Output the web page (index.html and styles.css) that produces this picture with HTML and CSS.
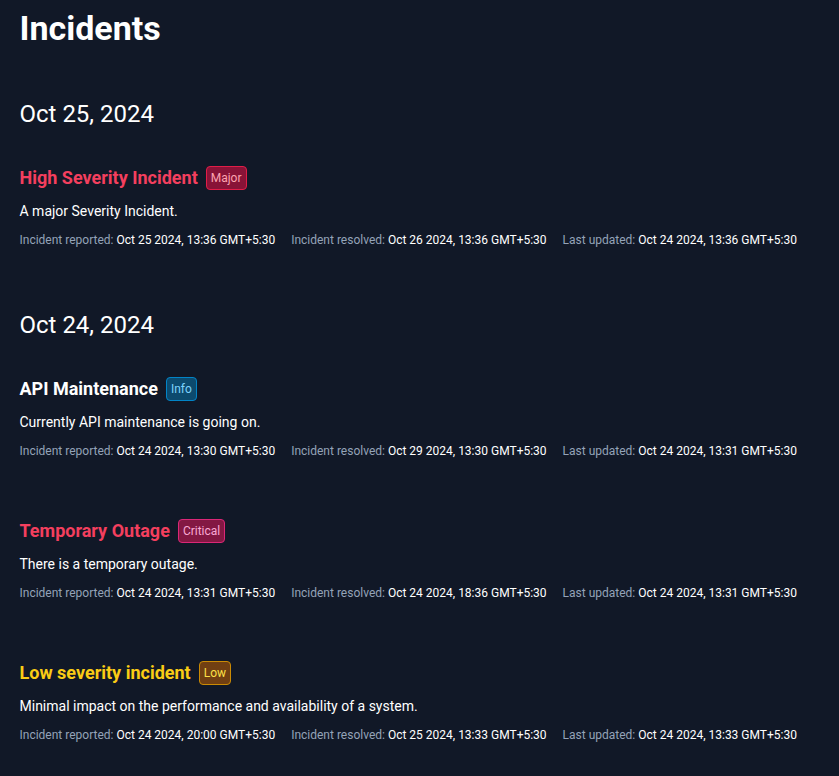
FILE: index.html
```html
<!DOCTYPE html>
<html lang="en">
<head>
<meta charset="utf-8">
<meta name="viewport" content="width=device-width, initial-scale=1">
<title>Incidents</title>
<link rel="stylesheet" href="styles.css">
</head>
<body>
<main class="page">
  <h1 class="page-title">Incidents</h1>
  <section class="day">
    <h2 class="day-title">Oct 25, 2024</h2>
    <article class="incident">
      <header class="incident-head"><h3 class="incident-title is-red">High Severity Incident</h3><span class="badge badge-major">Major</span></header>
      <p class="incident-text">A major Severity Incident.</p>
      <ul class="meta">
        <li>Incident reported: <time>Oct 25 2024, 13:36 GMT+5:30</time></li>
        <li>Incident resolved: <time>Oct 26 2024, 13:36 GMT+5:30</time></li>
        <li>Last updated: <time>Oct 24 2024, 13:36 GMT+5:30</time></li>
      </ul>
    </article>
  </section>
  <section class="day">
    <h2 class="day-title">Oct 24, 2024</h2>
    <article class="incident">
      <header class="incident-head"><h3 class="incident-title">API Maintenance</h3><span class="badge badge-info">Info</span></header>
      <p class="incident-text">Currently API maintenance is going on.</p>
      <ul class="meta">
        <li>Incident reported: <time>Oct 24 2024, 13:30 GMT+5:30</time></li>
        <li>Incident resolved: <time>Oct 29 2024, 13:30 GMT+5:30</time></li>
        <li>Last updated: <time>Oct 24 2024, 13:31 GMT+5:30</time></li>
      </ul>
    </article>
    <article class="incident">
      <header class="incident-head"><h3 class="incident-title is-red">Temporary Outage</h3><span class="badge badge-critical">Critical</span></header>
      <p class="incident-text">There is a temporary outage.</p>
      <ul class="meta">
        <li>Incident reported: <time>Oct 24 2024, 13:31 GMT+5:30</time></li>
        <li>Incident resolved: <time>Oct 24 2024, 18:36 GMT+5:30</time></li>
        <li>Last updated: <time>Oct 24 2024, 13:31 GMT+5:30</time></li>
      </ul>
    </article>
    <article class="incident">
      <header class="incident-head"><h3 class="incident-title is-yellow">Low severity incident</h3><span class="badge badge-low">Low</span></header>
      <p class="incident-text">Minimal impact on the performance and availability of a system.</p>
      <ul class="meta">
        <li>Incident reported: <time>Oct 24 2024, 20:00 GMT+5:30</time></li>
        <li>Incident resolved: <time>Oct 25 2024, 13:33 GMT+5:30</time></li>
        <li>Last updated: <time>Oct 24 2024, 13:33 GMT+5:30</time></li>
      </ul>
    </article>
  </section>
</main>
</body>
</html>
```
FILE: styles.css
```css
* { box-sizing: border-box; margin: 0; padding: 0; }
body { background: #111827; color: #fff; font-family: Roboto, "Liberation Sans", sans-serif; }
.page { width: min(100% - 32px, 800px); margin: 0 auto; padding: 8px 0 32px; display: flex; flex-direction: column; }
.page-title { font-size: 34px; line-height: 40px; font-weight: 700; }
.day { display: flex; flex-direction: column; margin-top: 50px; }
.day + .day { margin-top: 61px; }
.day-title { font-size: 24px; line-height: 32px; font-weight: 400; margin-bottom: 36px; }
.incident { display: flex; flex-direction: column; }
.incident + .incident { margin-top: 60px; }
.incident-head { display: flex; align-items: center; gap: 8px; }
.incident-title { font-size: 18px; line-height: 24px; font-weight: 700; }
.is-red { color: #f43f5e; }
.is-yellow { color: #facc15; }
.badge { font-size: 12px; line-height: 16px; padding: 3px 4px; border: 1px solid; border-radius: 4px; }
.badge-major { background: #881337; border-color: #e11d48; color: #fda4af; }
.badge-info { background: #0c4a6e; border-color: #0284c7; color: #7dd3fc; }
.badge-critical { background: #831843; border-color: #db2777; color: #f9a8d4; }
.badge-low { background: #713f12; border-color: #ca8a04; color: #fde047; }
.incident-text { font-size: 14px; line-height: 20px; margin-top: 11px; }
.meta { display: flex; flex-wrap: wrap; column-gap: 16px; list-style: none; margin-top: 11px; font-size: 12px; line-height: 16px; color: #94a3b8; }
.meta time { color: #fff; }
```
